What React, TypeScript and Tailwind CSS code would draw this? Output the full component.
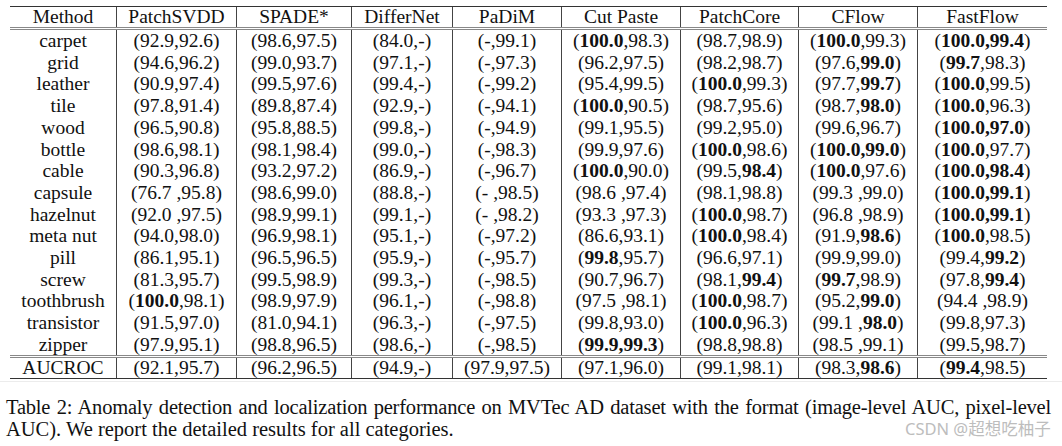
import React from "react";

const cols = ["Method", "PatchSVDD", "SPADE*", "DifferNet", "PaDiM", "Cut Paste", "PatchCore", "CFlow", "FastFlow"];

const rows: string[][] = [
  ["carpet", "(92.9,92.6)", "(98.6,97.5)", "(84.0,-)", "(-,99.1)", "(**100.0**,98.3)", "(98.7,98.9)", "(**100.0**,99.3)", "(**100.0,99.4**)"],
  ["grid", "(94.6,96.2)", "(99.0,93.7)", "(97.1,-)", "(-,97.3)", "(96.2,97.5)", "(98.2,98.7)", "(97.6,**99.0**)", "(**99.7**,98.3)"],
  ["leather", "(90.9,97.4)", "(99.5,97.6)", "(99.4,-)", "(-,99.2)", "(95.4,99.5)", "(**100.0**,99.3)", "(97.7,**99.7**)", "(**100.0**,99.5)"],
  ["tile", "(97.8,91.4)", "(89.8,87.4)", "(92.9,-)", "(-,94.1)", "(**100.0**,90.5)", "(98.7,95.6)", "(98.7,**98.0**)", "(**100.0**,96.3)"],
  ["wood", "(96.5,90.8)", "(95.8,88.5)", "(99.8,-)", "(-,94.9)", "(99.1,95.5)", "(99.2,95.0)", "(99.6,96.7)", "(**100.0,97.0**)"],
  ["bottle", "(98.6,98.1)", "(98.1,98.4)", "(99.0,-)", "(-,98.3)", "(99.9,97.6)", "(**100.0**,98.6)", "(**100.0,99.0**)", "(**100.0**,97.7)"],
  ["cable", "(90.3,96.8)", "(93.2,97.2)", "(86.9,-)", "(-,96.7)", "(**100.0**,90.0)", "(99.5,**98.4**)", "(**100.0**,97.6)", "(**100.0,98.4**)"],
  ["capsule", "(76.7 ,95.8)", "(98.6,99.0)", "(88.8,-)", "(- ,98.5)", "(98.6 ,97.4)", "(98.1,98.8)", "(99.3 ,99.0)", "(**100.0,99.1**)"],
  ["hazelnut", "(92.0 ,97.5)", "(98.9,99.1)", "(99.1,-)", "(- ,98.2)", "(93.3 ,97.3)", "(**100.0**,98.7)", "(96.8 ,98.9)", "(**100.0,99.1**)"],
  ["meta nut", "(94.0,98.0)", "(96.9,98.1)", "(95.1,-)", "(-,97.2)", "(86.6,93.1)", "(**100.0**,98.4)", "(91.9,**98.6**)", "(**100.0**,98.5)"],
  ["pill", "(86.1,95.1)", "(96.5,96.5)", "(95.9,-)", "(-,95.7)", "(**99.8**,95.7)", "(96.6,97.1)", "(99.9,99.0)", "(99.4,**99.2**)"],
  ["screw", "(81.3,95.7)", "(99.5,98.9)", "(99.3,-)", "(-,98.5)", "(90.7,96.7)", "(98.1,**99.4**)", "(**99.7**,98.9)", "(97.8,**99.4**)"],
  ["toothbrush", "(**100.0**,98.1)", "(98.9,97.9)", "(96.1,-)", "(-,98.8)", "(97.5 ,98.1)", "(**100.0**,98.7)", "(95.2,**99.0**)", "(94.4 ,98.9)"],
  ["transistor", "(91.5,97.0)", "(81.0,94.1)", "(96.3,-)", "(-,97.5)", "(99.8,93.0)", "(**100.0**,96.3)", "(99.1 ,**98.0**)", "(99.8,97.3)"],
  ["zipper", "(97.9,95.1)", "(98.8,96.5)", "(98.6,-)", "(-,98.5)", "(**99.9,99.3**)", "(98.8,98.8)", "(98.5 ,99.1)", "(99.5,98.7)"],
];

const total = ["AUCROC", "(92.1,95.7)", "(96.2,96.5)", "(94.9,-)", "(97.9,97.5)", "(97.1,96.0)", "(99.1,98.1)", "(98.3,**98.6**)", "(**99.4**,98.5)"];

function Rich({ s }: { s: string }) {
  const parts = s.split("**");
  return (
    <>
      {parts.map((p, i) => (i % 2 === 1 ? <b key={i} className="font-bold">{p}</b> : <span key={i}>{p}</span>))}
    </>
  );
}

function Row({ cells, h }: { cells: string[]; h: string }) {
  return (
    <div className={`grid grid-cols-[107px_120px_115px_101px_109px_119px_118px_119px_129px] ${h}`}>
      {cells.map((c, i) => (
        <div
          key={i}
          className={`flex items-center justify-center whitespace-pre leading-none ${i < 8 ? "border-r border-[#444]" : ""}`}
        >
          <Rich s={c} />
        </div>
      ))}
    </div>
  );
}

export default function App() {
  return (
    <div
      className="relative w-[1062px] h-[446px] bg-white text-[#111] overflow-hidden pt-[6px]"
      style={{ fontFamily: '"Liberation Serif", "Times New Roman", serif' }}
    >
      <div className="ml-[10px] w-[1037px] text-[19.5px] border-t border-b border-[#333]">
        <div className="border-b-[3px] border-double border-[#888]">
          <Row cells={cols} h="h-[20px]" />
        </div>
        {rows.map((r, i) => (
          <Row key={i} cells={r} h="h-[21.7px]" />
        ))}
        <div className="border-t-[3px] border-double border-[#888]">
          <Row cells={total} h="h-[19.5px]" />
        </div>
      </div>
      <div className="mt-[2px] h-px bg-[#ececec]" />
      <div className="ml-[6px] w-[1045px] mt-[14px] text-[20.5px] leading-[22px]">
        <div className="[text-align-last:justify] text-justify tracking-[-0.2px]">
          Table 2: Anomaly detection and localization performance on MVTec AD dataset with the format (image-level AUC, pixel-level
        </div>
        <div>AUC). We report the detailed results for all categories.</div>
      </div>
      <div
        className="absolute left-[905px] top-[417px] text-[16.5px] text-[#bdbdbd] whitespace-nowrap"
        style={{ fontFamily: '"Noto Sans", "Noto Sans CJK SC", sans-serif' }}
      >
        CSDN @超想吃柚子
      </div>
    </div>
  );
}
